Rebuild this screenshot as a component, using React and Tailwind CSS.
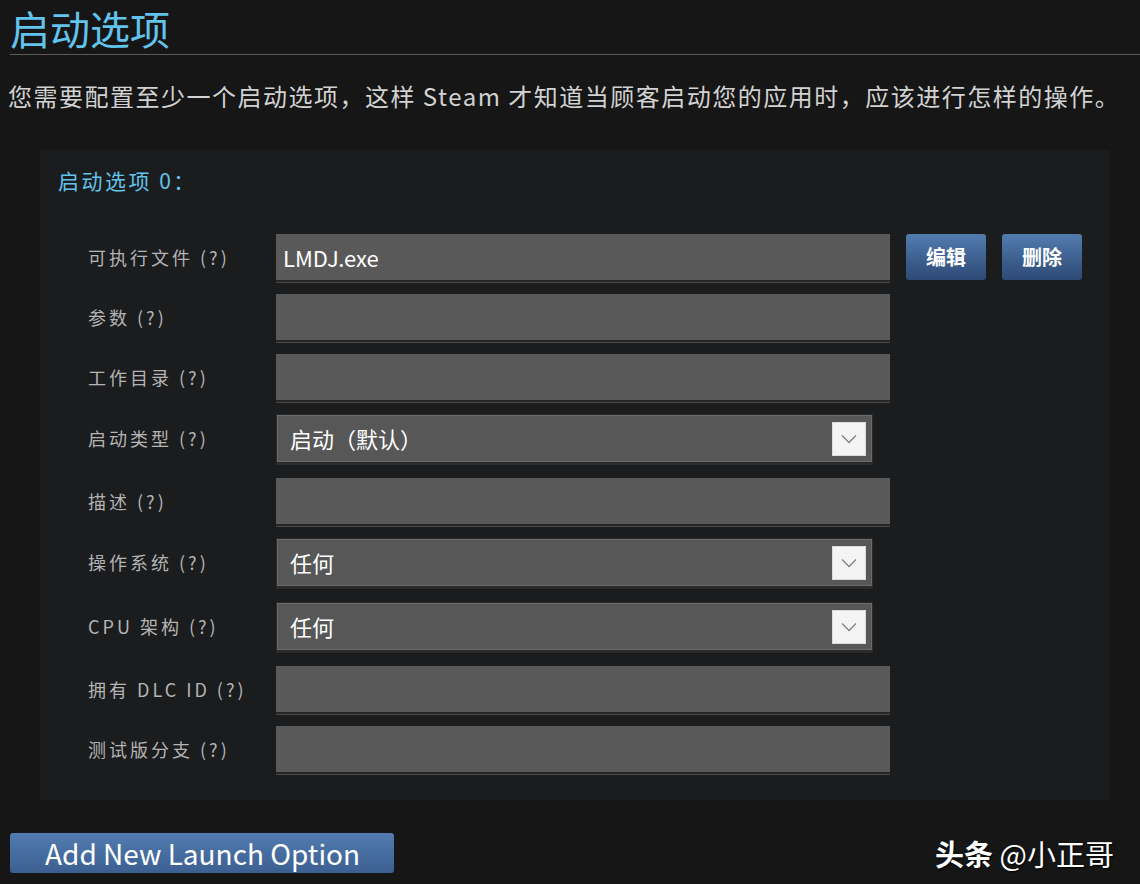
import React from "react";

const font = { fontFamily: '"Noto Sans CJK SC", "Noto Sans", sans-serif' };

const rows = [
  { label: "可执行文件 (?)", type: "input", value: "LMDJ.exe", buttons: true },
  { label: "参数 (?)", type: "input" },
  { label: "工作目录 (?)", type: "input" },
  { label: "启动类型 (?)", type: "select", value: "启动（默认）" },
  { label: "描述 (?)", type: "input" },
  { label: "操作系统 (?)", type: "select", value: "任何" },
  { label: "CPU 架构 (?)", type: "select", value: "任何" },
  { label: "拥有 DLC ID (?)", type: "input" },
  { label: "测试版分支 (?)", type: "input" },
];

function Chevron() {
  return (
    <div className="flex h-[34px] w-[34px] items-center justify-center bg-[#f4f4f4] shadow-[inset_0_0_0_1px_#dcdcdc]">
      <svg width="16" height="10" viewBox="0 0 16 10" fill="none">
        <path d="M1 1.5 L8 8.5 L15 1.5" stroke="#808080" strokeWidth="1.3" />
      </svg>
    </div>
  );
}

function BlueButton({ children }) {
  return (
    <button className="flex h-[46px] w-[80px] items-center justify-center rounded-[3px] bg-gradient-to-b from-[#527cb0] to-[#2d4a75] text-[20px] font-bold text-white">
      {children}
    </button>
  );
}

function Row({ row, last }) {
  const isSelect = row.type === "select";
  return (
    <div
      className={`flex items-center ${last ? "" : isSelect ? "mb-[15px]" : "mb-[14px]"}`}
    >
      <div className="w-[188px] shrink-0 whitespace-nowrap text-[18px] tracking-[3px] text-[#b4b4b4]">
        {row.label}
      </div>
      {isSelect ? (
        <div className="flex h-[49px] w-[597px] items-center justify-between border border-[#2b2b2b] bg-[#575757] pl-[13px] pr-[6px] shadow-[inset_0_0_0_1px_#6a6a6a,0_2px_0_#2a2a2a]">
          <span className="text-[22px] text-white">{row.value}</span>
          <Chevron />
        </div>
      ) : (
        <div className="flex h-[46px] w-[614px] items-center bg-[#59595a] px-[7px] text-[22px] text-white shadow-[0_2px_0_#262626,0_3px_0_#4a4a4a]">
          {row.value}
        </div>
      )}
      {row.buttons && (
        <div className="ml-[16px] flex gap-[16px]">
          <BlueButton>编辑</BlueButton>
          <BlueButton>删除</BlueButton>
        </div>
      )}
    </div>
  );
}

export default function App() {
  return (
    <div
      className="relative h-[884px] w-[1140px] overflow-hidden bg-[#161616]"
      style={font}
    >
      <h1 className="pl-[10px] pt-[4px] text-[40px] leading-[48px] text-[#62c4ec]">
        启动选项
      </h1>
      <div className="ml-[10px] mt-[2px] h-px bg-[#5a5a5a]" />
      <p className="mt-[26px] whitespace-nowrap pl-[8px] text-[24px] leading-[30px] tracking-[1.5px] text-[#d2d2d2]">
        您需要配置至少一个启动选项，这样 Steam 才知道当顾客启动您的应用时，应该进行怎样的操作。
      </p>

      <div className="ml-[40px] mt-[39px] w-[1070px] bg-[#1b1c1e] pb-[28px] pt-[15px]">
        <div className="pl-[18px] text-[21px] leading-[30px] tracking-[2.5px] text-[#62c4ec]">
          启动选项 0：
        </div>
        <div className="mt-[39px] pl-[48px]">
          {rows.map((r, i) => (
            <Row key={i} row={r} last={i === rows.length - 1} />
          ))}
        </div>
      </div>

      <div className="mt-[33px] flex items-center justify-between pl-[10px] pr-[26px]">
        <button className="h-[40px] w-[384px] rounded-[3px] bg-gradient-to-b from-[#527cb0] to-[#3c5f91] pl-[35px] text-left text-[28px] leading-[40px] text-white">
          Add New Launch Option
        </button>
        <div className="text-[29px] leading-[34px] text-white [text-shadow:1px_1px_2px_#000]">
          <span className="font-bold">头条</span> @小正哥
        </div>
      </div>
    </div>
  );
}
